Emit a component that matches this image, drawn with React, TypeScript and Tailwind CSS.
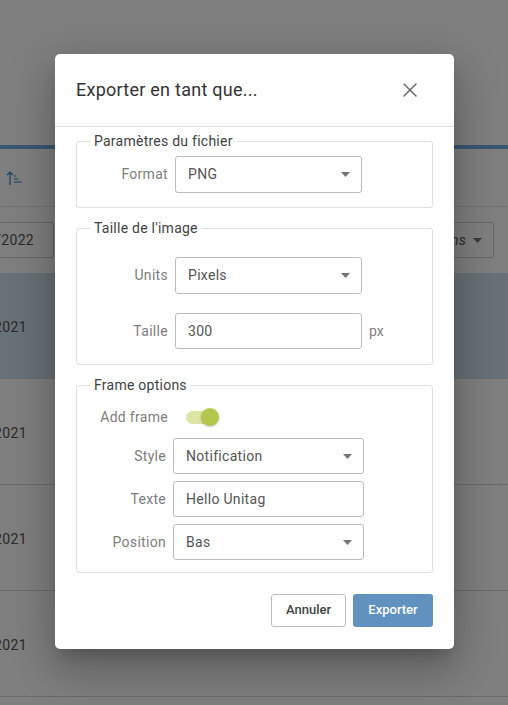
import React from 'react';
import { X } from 'lucide-react';

const Caret = () => (
    <svg width="9" height="5" viewBox="0 0 10 5" preserveAspectRatio="none" className="shrink-0">
        <path d="M0 0h10L5 5z" fill="#757575" />
    </svg>
);

const Select = ({ value, className }: { value: string; className: string }) => (
    <div className={`flex items-center justify-between rounded-[3px] border border-[#bdbdbd] pl-[12px] pr-[11px] text-[14px] tracking-[0.3px] text-[#555555] ${className}`}>
        <span>{value}</span>
        <Caret />
    </div>
);

const TextField = ({ value, className }: { value: string; className: string }) => (
    <div className={`flex h-[36px] items-center rounded-[3px] border border-[#bdbdbd] pl-[12px] text-[14px] tracking-[0.3px] text-[#555555] ${className}`}>
        {value}
    </div>
);

const Group = ({ title, className, children }: { title: string; className: string; children: React.ReactNode }) => (
    <fieldset className={`rounded-[3px] border border-[#e0e0e0] ${className}`}>
        <legend className="ml-[13px] px-[4px] text-[14px] leading-[16px] tracking-[0.25px] text-[#424242]">{title}</legend>
        {children}
    </fieldset>
);

const Label = ({ children, className }: { children: React.ReactNode; className: string }) => (
    <span className={`shrink-0 text-right text-[14px] tracking-[0.3px] text-[#7d7d7d] ${className}`}>{children}</span>
);

const DataRow = ({ active }: { active?: boolean }) => (
    <div className={`flex h-[106px] items-center border-b border-[#d6d6d6] pt-[3px] ${active ? 'bg-[#d0e2ee]' : 'bg-white'}`}>
        <div className="flex w-[27px] justify-end overflow-hidden text-[14px] tracking-[0.4px] text-[#555555]">
            <span className="shrink-0">12/2021</span>
        </div>
    </div>
);

export default function App() {
    return (
        <div className="relative h-[705px] w-[508px] overflow-hidden bg-white font-['Roboto',sans-serif]">
            {/* Page behind the dialog */}
            <div className="h-[145px]" />
            <div className="h-[4px] bg-[#74aee6]" />
            <div className="flex h-[58px] items-center border-b border-[#e6e6e6] pl-[7px]">
                <svg width="15" height="14" viewBox="0 0 15 14" fill="none" stroke="#3b82c4" strokeWidth="1.2">
                    <path d="M3 14V1M0 4l3-3 3 3M7 5h2M7 8h4M7 11h8" />
                </svg>
            </div>
            <div className="flex h-[66px] items-center justify-between pr-[14px]">
                <div className="flex h-[36px] w-[54px] items-center justify-end overflow-hidden rounded-r-[3px] border border-l-0 border-[#cfcfcf] pr-[19px] text-[14px] tracking-[0.3px] text-[#555555]">
                    <span className="shrink-0">01/01/2022</span>
                </div>
                <div className="flex h-[36px] w-[110px] items-center justify-end gap-[7px] rounded-[3px] border border-[#cfcfcf] pr-[11px] text-[14px] italic tracking-[0.3px] text-[#555555]">
                    <span>Actions</span>
                    <Caret />
                </div>
            </div>
            <DataRow active />
            <DataRow />
            <DataRow />
            <DataRow />

            {/* Backdrop */}
            <div className="absolute inset-0 bg-black/50" />

            {/* Dialog */}
            <div className="absolute left-[55px] top-[54px] h-[595px] w-[399px] rounded-[5px] bg-white shadow-[0_11px_15px_-7px_rgba(0,0,0,0.2),0_24px_38px_3px_rgba(0,0,0,0.14),0_9px_46px_8px_rgba(0,0,0,0.12)]">
                <div className="flex h-[73px] items-center justify-between border-b border-[#e0e0e0] pl-[21px] pr-[32px]">
                    <h2 className="pb-[2px] text-[18px] font-normal tracking-[0.25px] text-[#333333]">Exporter en tant que...</h2>
                    <X size={24} strokeWidth={1.5} className="text-[#6b6b6b]" />
                </div>

                <div className="px-[21px] pt-[6px]">
                    <Group title="Paramètres du fichier" className="h-[75px]">
                        <div className="flex items-center gap-[7px] pt-[7px]">
                            <Label className="w-[91px]">Format</Label>
                            <Select value="PNG" className="h-[37px] w-[187px]" />
                        </div>
                    </Group>

                    <Group title="Taille de l'image" className="mt-[12px] h-[145px]">
                        <div className="flex items-center gap-[7px] pt-[21px]">
                            <Label className="w-[91px]">Units</Label>
                            <Select value="Pixels" className="h-[37px] w-[187px]" />
                        </div>
                        <div className="mt-[19px] flex items-center gap-[7px]">
                            <Label className="w-[91px]">Taille</Label>
                            <TextField value="300" className="w-[187px]" />
                            <span className="text-[14px] text-[#7d7d7d]">px</span>
                        </div>
                    </Group>

                    <Group title="Frame options" className="mt-[12px] h-[196px]">
                        <div className="mt-[11px] flex h-[26px] items-center">
                            <Label className="w-[91px]">Add frame</Label>
                            <div className="relative ml-[18px] h-[13px] w-[30px] rounded-full bg-[#dce5a4]">
                                <div className="absolute left-[15px] top-[-3px] h-[18px] w-[18px] rounded-full bg-[#b4c74a] shadow-[0_1px_2px_rgba(0,0,0,0.25)]" />
                            </div>
                        </div>
                        <div className="mt-[8px] flex flex-col gap-[7px]">
                            <div className="flex items-center gap-[7px]">
                                <Label className="w-[89px]">Style</Label>
                                <Select value="Notification" className="h-[36px] w-[191px]" />
                            </div>
                            <div className="flex items-center gap-[7px]">
                                <Label className="w-[89px]">Texte</Label>
                                <TextField value="Hello Unitag" className="w-[191px]" />
                            </div>
                            <div className="flex items-center gap-[7px]">
                                <Label className="w-[89px]">Position</Label>
                                <Select value="Bas" className="h-[36px] w-[191px]" />
                            </div>
                        </div>
                    </Group>

                    <div className="mt-[21px] flex justify-end gap-[7px]">
                        <button className="h-[33px] w-[75px] rounded-[3px] border border-[#bdbdbd] bg-white pb-[2px] text-[13px] font-medium text-[#424242]">Annuler</button>
                        <button className="h-[33px] w-[80px] rounded-[3px] bg-[#6192bf] pb-[2px] text-[13px] font-medium text-white">Exporter</button>
                    </div>
                </div>
            </div>
        </div>
    );
}
